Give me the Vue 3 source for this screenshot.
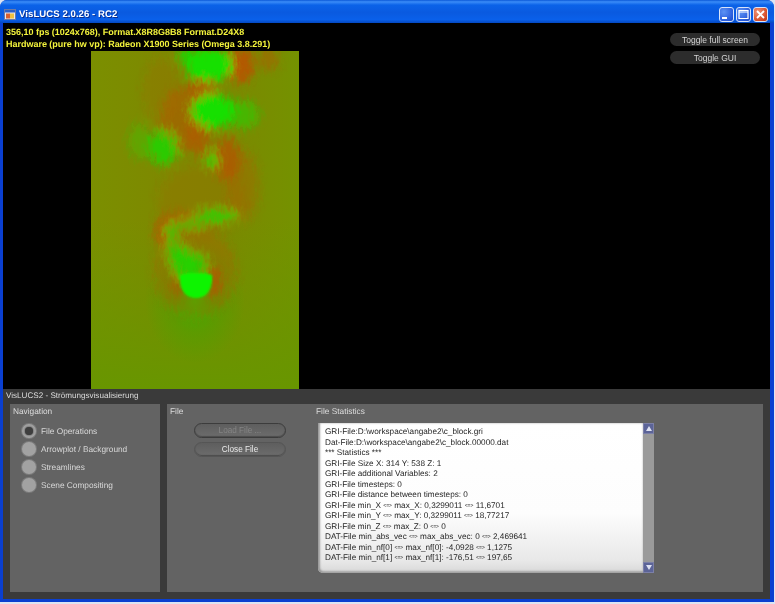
<script setup>
const navItems = [
  { label: 'File Operations', selected: true },
  { label: 'Arrowplot / Background', selected: false },
  { label: 'Streamlines', selected: false },
  { label: 'Scene Compositing', selected: false },
]

const statLines = [
  'GRI-File:D:\\workspace\\angabe2\\c_block.gri',
  'Dat-File:D:\\workspace\\angabe2\\c_block.00000.dat',
  '*** Statistics ***',
  'GRI-File Size X: 314 Y: 538 Z: 1',
  'GRI-File additional Variables: 2',
  'GRI-File timesteps: 0',
  'GRI-File distance between timesteps: 0',
  'GRI-File min_X <=> max_X: 0,3299011 <=> 11,6701',
  'GRI-File min_Y <=> max_Y: 0,3299011 <=> 18,77217',
  'GRI-File min_Z <=> max_Z: 0 <=> 0',
  'DAT-File min_abs_vec <=> max_abs_vec: 0 <=> 2,469641',
  'DAT-File min_nf[0] <=> max_nf[0]: -4,0928 <=> 1,1275',
  'DAT-File min_nf[1] <=> max_nf[1]: -176,51 <=> 197,65',
]

// rough blobs of the flow field, coordinates inside the 208x338 plot
const redBlobs = [
  [150, 14, 13, 18, 1], [178, 8, 10, 12, 0.5], [111, 40, 14, 12, 0.8], [90, 68, 20, 32, 0.55],
  [108, 82, 12, 24, 0.7], [136, 108, 13, 22, 0.8], [152, 135, 16, 36, 0.35], [70, 40, 18, 34, 0.2],
  [92, 168, 24, 7, 0.7], [72, 182, 8, 14, 0.9], [123, 231, 7, 16, 1], [86, 232, 6, 16, 0.8],
  [104, 222, 42, 44, 0.35], [110, 150, 44, 36, 0.2],
]

const greenBlobs = [
  [118, 14, 24, 16, 1], [100, 5, 14, 7, 0.8], [122, 60, 22, 17, 1], [152, 64, 16, 14, 0.5],
  [72, 97, 15, 17, 0.75], [48, 90, 10, 18, 0.3], [121, 109, 6, 8, 0.8], [125, 165, 22, 6, 0.8],
  [98, 173, 16, 4, 0.7], [80, 182, 6, 10, 0.7], [82, 200, 7, 10, 0.65], [92, 212, 11, 16, 0.8],
  [106, 216, 10, 13, 0.7],
]
</script>

<template>
  <div class="window">
    <header class="titlebar">
      <svg class="app-icon" width="12" height="11" viewBox="0 0 12 11">
        <rect x="0.5" y="0.5" width="11" height="10" fill="#e8e8f0" stroke="#6a7aa8" />
        <rect x="1" y="1" width="10" height="2.5" fill="#2c5fc8" />
        <rect x="2" y="4.5" width="4" height="5" fill="#d86030" />
        <rect x="6" y="4.5" width="4" height="5" fill="#f0c040" />
      </svg>
      <span class="titlebar__text">VisLUCS 2.0.26 - RC2</span>
      <div class="titlebar__buttons">
        <span class="winbtn">
          <svg width="15" height="15" viewBox="0 0 15 15"><rect x="3" y="10" width="5" height="2" fill="#fff" /></svg>
        </span>
        <span class="winbtn">
          <svg width="15" height="15" viewBox="0 0 15 15"><path d="M3 3.5h9v8H3z M3 5h9" fill="none" stroke="#fff" stroke-width="1.2" /></svg>
        </span>
        <span class="winbtn winbtn--close">
          <svg width="15" height="15" viewBox="0 0 15 15"><path d="M4 4l7 7M11 4l-7 7" stroke="#fff" stroke-width="1.8" /></svg>
        </span>
      </div>
    </header>

    <div class="client">
      <main class="viewport">
        <svg class="plot" width="208" height="338" viewBox="0 0 208 338">
          <defs>
            <linearGradient id="base" x1="0" x2="1" y1="0" y2="0">
              <stop offset="0" stop-color="#7b8f00" />
              <stop offset="0.4" stop-color="#7e8800" />
              <stop offset="0.65" stop-color="#7c8800" />
              <stop offset="1" stop-color="#749200" />
            </linearGradient>
            <linearGradient id="lower" x1="0" x2="0" y1="0" y2="1">
              <stop offset="0.5" stop-color="#689600" stop-opacity="0" />
              <stop offset="1" stop-color="#689600" stop-opacity="1" />
            </linearGradient>
            <radialGradient id="glow">
              <stop offset="0" stop-color="#28c800" stop-opacity="0.75" />
              <stop offset="0.5" stop-color="#30b000" stop-opacity="0.3" />
              <stop offset="1" stop-color="#30b000" stop-opacity="0" />
            </radialGradient>
            <filter id="rough" x="-20%" y="-20%" width="140%" height="140%">
              <feGaussianBlur in="SourceGraphic" stdDeviation="4" result="soft" />
              <feTurbulence type="fractalNoise" baseFrequency="0.3 0.12" numOctaves="3" seed="7" result="noise" />
              <feDisplacementMap in="soft" in2="noise" scale="12" xChannelSelector="R" yChannelSelector="G" />
              <feGaussianBlur stdDeviation="0.5" />
            </filter>
            <filter id="soft"><feGaussianBlur stdDeviation="1.2" /></filter>
          </defs>
          <rect width="208" height="338" fill="url(#base)" />
          <rect width="208" height="338" fill="url(#lower)" />
          <ellipse cx="104" cy="250" rx="50" ry="62" fill="url(#glow)" />
          <g filter="url(#rough)">
            <g opacity="0.72">
              <ellipse v-for="(b, i) in redBlobs" :key="'r' + i" :cx="b[0]" :cy="b[1]" :rx="b[2]" :ry="b[3]" fill="#c84400" :opacity="b[4]" />
            </g>
            <ellipse v-for="(b, i) in greenBlobs" :key="'g' + i" :cx="b[0]" :cy="b[1]" :rx="b[2]" :ry="b[3]" fill="#14e000" :opacity="b[4]" />
          </g>
          <g filter="url(#soft)">
            <path d="M89 224 C95 221 113 221 121 224 C122 238 116 247 105 247 C94 247 88 238 89 224Z" fill="#0cf400" />
          </g>
        </svg>

        <div class="hud">
          <div>356,10 fps (1024x768), Format.X8R8G8B8 Format.D24X8</div>
          <div>Hardware (pure hw vp): Radeon X1900 Series (Omega 3.8.291)</div>
        </div>

        <div class="toggles">
          <button class="toggle">Toggle full screen</button>
          <button class="toggle">Toggle GUI</button>
        </div>
      </main>

      <section class="gui">
        <div class="gui__caption">VisLUCS2 - Strömungsvisualisierung</div>
        <div class="gui__panels">
          <div class="panel panel--nav">
            <div class="panel__title">Navigation</div>
            <div class="nav">
              <div v-for="item in navItems" :key="item.label" class="nav__item">
                <span class="radio" :class="{ 'radio--on': item.selected }"></span>
                <span>{{ item.label }}</span>
              </div>
            </div>
          </div>

          <div class="panel panel--file">
            <div class="file-actions">
              <div class="panel__title">File</div>
              <div class="file-actions__buttons">
                <button class="pill pill--disabled">Load File ...</button>
                <button class="pill">Close File</button>
              </div>
            </div>
            <div class="stats">
              <div class="panel__title">File Statistics</div>
              <div class="stats__body">
                <div class="stats__text">
                  <div v-for="(line, i) in statLines" :key="i" class="stats__line">
                    <template v-for="(part, j) in line.split('<=>')" :key="j"><span v-if="j" class="stats__op">&lt;=&gt;</span>{{ part }}</template>
                  </div>
                </div>
                <div class="scroll">
                  <span class="scroll__btn"><i class="arrow arrow--up"></i></span>
                  <span class="scroll__btn"><i class="arrow arrow--down"></i></span>
                </div>
              </div>
            </div>
          </div>
        </div>
      </section>
    </div>
  </div>
</template>

<style scoped>
.window {
  width: 774px;
  height: 602px;
  display: flex;
  flex-direction: column;
  font-family: "Liberation Sans", Arial, sans-serif;
  text-rendering: geometricPrecision;
  border-radius: 7px 7px 0 0;
  overflow: hidden;
  background: #0a3fd0;
}

.titlebar {
  height: 23px;
  box-sizing: border-box;
  padding: 5px 6px 0 4px;
  flex: none;
  display: flex;
  align-items: center;
  background: linear-gradient(180deg, #0a58d8 0%, #3a8cf8 8%, #0a62e8 22%, #0a5ae0 55%, #0a60ea 85%, #0448c0 100%);
}

.app-icon {
  flex: none;
  margin-right: 3px;
}

.titlebar__text {
  color: #fff;
  font-size: 9.6px;
  font-weight: 700;
  letter-spacing: 0.05px;
  text-shadow: 1px 1px 0 #0a2f90;
  filter: blur(0.2px);
}

.titlebar__buttons {
  margin-left: auto;
  display: flex;
  gap: 2px;
  margin-top: 1px;
}

.winbtn {
  width: 15px;
  height: 15px;
  border-radius: 3px;
  border: 1px solid #d8e4fa;
  box-sizing: border-box;
  background: radial-gradient(circle at 30% 30%, #5c92f4, #2a5cdc 70%, #1c48c0);
  overflow: hidden;
}

.winbtn svg {
  display: block;
  margin: -1px;
}

.winbtn--close {
  background: radial-gradient(circle at 30% 30%, #ee9478, #d8502c 65%, #b83010);
}

.client {
  flex: 1;
  margin: 0 4px 3px 3px;
  display: flex;
  flex-direction: column;
  min-height: 0;
}

.viewport {
  position: relative;
  height: 366px;
  flex: none;
  background: #000;
  box-sizing: border-box;
  padding: 28px 0 0 88px;
  overflow: hidden;
}

.plot {
  display: block;
}

.hud {
  position: absolute;
  left: 3px;
  top: 4px;
  color: #f4f43c;
  font-size: 8.97px;
  font-weight: 700;
  line-height: 11.5px;
  white-space: nowrap;
  filter: blur(0.3px);
}

.toggles {
  position: absolute;
  top: 10px;
  right: 10px;
  display: flex;
  flex-direction: column;
  gap: 5px;
  filter: blur(0.3px);
}

.toggle {
  width: 90px;
  height: 13px;
  padding: 0;
  border: 0;
  border-radius: 7px;
  background: #2c2c2c;
  color: #d4d4d4;
  font: 8.5px "Liberation Sans", Arial, sans-serif;
}

.gui {
  flex: 1;
  min-height: 0;
  background: #3a3a3a;
  display: flex;
  flex-direction: column;
  padding: 0 7px 7px 7px;
  filter: blur(0.3px);
}

.gui__caption {
  height: 15px;
  flex: none;
  margin-left: -4px;
  padding-top: 1px;
  box-sizing: border-box;
  color: #dcdcdc;
  font-size: 8.1px;
  line-height: 12px;
  white-space: nowrap;
}

.gui__panels {
  flex: 1;
  min-height: 0;
  display: grid;
  grid-template-columns: 150px 1fr;
  gap: 7px;
}

.panel {
  background: #636363;
  color: #dedede;
  font-size: 8.3px;
  position: relative;
}

.panel__title {
  padding-top: 1px;
  line-height: 12px;
  color: #dcdcdc;
}

.panel--nav {
  padding: 0 3px;
}

.nav {
  margin: 6px 0 0 9px;
  display: flex;
  flex-direction: column;
  gap: 2px;
}

.nav__item {
  display: flex;
  align-items: center;
  gap: 5px;
  height: 16px;
  color: #d8d8d8;
}

.radio {
  width: 14px;
  height: 14px;
  border-radius: 50%;
  background: #a2a2a2;
  box-shadow: 0 0 0 1px #7c7c7c;
  flex: none;
  position: relative;
}

.radio--on::after {
  content: "";
  position: absolute;
  inset: 3px;
  border-radius: 50%;
  background: #3e3e3e;
  box-shadow: 0 0 2px #303030;
}

.panel--file {
  display: flex;
  padding-left: 3px;
}

.file-actions {
  width: 146px;
  flex: none;
}

.file-actions__buttons {
  margin: 6px 0 0 24px;
  display: flex;
  flex-direction: column;
  gap: 4px;
}

.pill {
  width: 92px;
  height: 15px;
  padding: 0;
  border: 1px solid #555;
  border-radius: 8px;
  background: linear-gradient(180deg, #5e5e5e, #6c6c6c);
  box-shadow: inset 0 -1px 1px #4c4c4c;
  color: #eaeaea;
  font: 8.2px "Liberation Sans", Arial, sans-serif;
}

.pill--disabled {
  color: #858585;
  border-color: #3c3c3c;
  border-width: 1.5px;
}

.stats {
  flex: 1;
  display: flex;
  flex-direction: column;
}

.stats__body {
  margin: 6px 0 0 2px;
  display: flex;
  width: 336px;
}

.stats__text {
  width: 325px;
  height: 150px;
  box-sizing: border-box;
  padding: 4px 0 0 7px;
  border-radius: 0 0 0 5px;
  background: linear-gradient(180deg, #fff 0%, #fdfdfd 60%, #e8e8e8 92%, #d8d8d8 100%);
  box-shadow: inset 2px 0 2px #9a9a9a, inset 0 -2px 2px #a8a8a8;
  color: #262626;
}

.stats__line {
  height: 10.5px;
  font-size: 8.2px;
  line-height: 10.5px;
  white-space: nowrap;
}

.stats__op {
  font-size: 5px;
  line-height: 0;
  vertical-align: 1px;
}

.scroll {
  width: 11px;
  height: 150px;
  background: #9a9a9a;
  display: flex;
  flex-direction: column;
  justify-content: space-between;
}

.scroll__btn {
  height: 11px;
  background: #5c6498;
  border: 1px solid #7c80a8;
  box-sizing: border-box;
  display: flex;
  align-items: center;
  justify-content: center;
}

.arrow {
  width: 0;
  height: 0;
  border-left: 3.5px solid transparent;
  border-right: 3.5px solid transparent;
}

.arrow--up {
  border-bottom: 5px solid #dfe2f2;
}

.arrow--down {
  border-top: 5px solid #dfe2f2;
}
</style>

<style>
html, body {
  background: #dde4f2;
}
</style>
